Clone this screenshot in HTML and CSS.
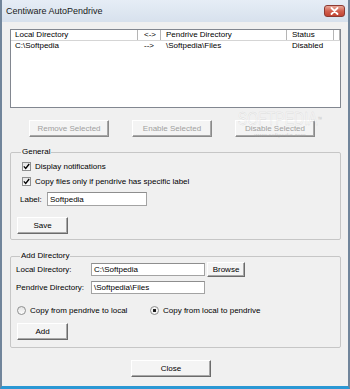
FILE: index.html
```html
<!DOCTYPE html>
<html lang="en">

<head>
    <meta charset="UTF-8" />
    <title>Centiware AutoPendrive</title>
    <link rel="stylesheet" href="styles.css">
</head>

<body>

    <div class="window">
        <div class="titlebar">
            <span class="title">Centiware AutoPendrive</span>
            <span class="close-x">
                <svg width="9" height="8" viewBox="0 0 9 8">
                    <path d="M1.5 1 L7.5 7 M7.5 1 L1.5 7" stroke="#fff" stroke-width="1.8" stroke-linecap="round" />
                </svg>
            </span>
        </div>

        <div class="client">
            <div class="listview">
                <div class="lv-header">
                    <span class="col col-local">Local Directory</span>
                    <span class="col col-dir">&lt;-&gt;</span>
                    <span class="col col-pen">Pendrive Directory</span>
                    <span class="col col-status">Status</span>
                    <span class="col col-rest"></span>
                </div>
                <div class="lv-row">
                    <span class="col col-local">C:\Softpedia</span>
                    <span class="col col-dir">--&gt;</span>
                    <span class="col col-pen">\Softpedia\Files</span>
                    <span class="col col-status">Disabled</span>
                </div>
            </div>

            <div class="actions">
                <button class="btn btn-wide" disabled>Remove Selected</button>
                <button class="btn btn-wide" disabled>Enable Selected</button>
                <button class="btn btn-wide" disabled>Disable Selected</button>
            </div>

            <!-- watermark over the button row -->
            <div class="watermark">
                <span class="wm-big">SOFTPEDIA<sup>™</sup></span>
                <span class="wm-small">www.softpedia.com</span>
            </div>

            <fieldset class="group group-general">
                <legend>General</legend>
                <div class="check">
                    <span class="box"><svg width="7" height="7" viewBox="0 0 7 7"><path d="M0.8 3.4 L2.7 5.5 L6.2 1" fill="none" stroke="#000" stroke-width="1.3" /></svg></span>
                    Display notifications
                </div>
                <div class="check">
                    <span class="box"><svg width="7" height="7" viewBox="0 0 7 7"><path d="M0.8 3.4 L2.7 5.5 L6.2 1" fill="none" stroke="#000" stroke-width="1.3" /></svg></span>
                    Copy files only if pendrive has specific label
                </div>
                <div class="label-row">
                    <span class="label-name">Label:</span>
                    <span class="input input-label">Softpedia</span>
                </div>
                <button class="btn btn-small btn-save">Save</button>
            </fieldset>

            <fieldset class="group group-add">
                <legend>Add Directory</legend>
                <div class="field-row">
                    <span class="field-name">Local Directory:</span>
                    <span class="input input-dir">C:\Softpedia</span>
                    <button class="btn btn-browse">Browse</button>
                </div>
                <div class="field-row field-row-second">
                    <span class="field-name">Pendrive Directory:</span>
                    <span class="input input-dir">\Softpedia\Files</span>
                </div>
                <div class="radio-row">
                    <div class="radio radio-first"><span class="dot"></span>Copy from pendrive to local</div>
                    <div class="radio"><span class="dot on"></span>Copy from local to pendrive</div>
                </div>
                <button class="btn btn-small btn-add">Add</button>
            </fieldset>

            <button class="btn btn-wide btn-close">Close</button>
        </div>
    </div>

</body>

</html>
```

FILE: styles.css
```css
html,
body {
    margin: 0;
    padding: 0;
    background: #fff;
    font-family: "Liberation Sans", Arial, sans-serif;
    font-size: 8px;
    color: #000;
}

.window {
    width: 350px;
    height: 389px;
    box-sizing: border-box;
    display: flex;
    flex-direction: column;
    border-left: 2px solid #71859b;
    border-right: 2px solid #71859b;
    border-bottom: 3px solid #2b98d4;
    background: #dbe4ef;
}

.titlebar {
    height: 22px;
    flex: none;
    display: flex;
    align-items: center;
    justify-content: space-between;
    padding: 0 3px 0 4px;
    background: linear-gradient(#e6edf6, #d7e1ed);
}

.title {
    font-size: 9px;
    color: #1a1a1a;
}

.close-x {
    width: 21px;
    height: 12px;
    box-sizing: border-box;
    display: flex;
    align-items: center;
    justify-content: center;
    border: 1px solid #8c3a33;
    border-radius: 3px;
    background: linear-gradient(#e9a99a, #d2604f 50%, #c24533);
}

.client {
    flex: 1;
    position: relative;
    display: flex;
    flex-direction: column;
    padding: 7px 7px 0 8px;
    background: #f0f0f0;
}

/* list view */

.listview {
    height: 79px;
    box-sizing: border-box;
    border: 1px solid #828790;
    background: #fff;
}

.lv-header,
.lv-row {
    display: flex;
}

.lv-header {
    height: 11px;
    box-sizing: border-box;
    border-bottom: 1px solid #d5d5d5;
}

.lv-header .col {
    border-right: 1px solid #b5b5b5;
    line-height: 10px;
}

.lv-row .col {
    line-height: 10px;
}

.col {
    box-sizing: border-box;
    padding-left: 5px;
    white-space: nowrap;
}

.col-local {
    width: 127px;
    padding-left: 4px;
}

.col-dir {
    width: 23px;
    padding-left: 6px;
}

.col-pen {
    width: 126px;
}

.col-status {
    width: 47px;
}

.col-rest {
    width: 5px;
}

/* buttons */

.btn {
    height: 17px;
    box-sizing: border-box;
    padding: 0;
    font: inherit;
    color: #000;
    background: #f4f4f4;
    border: 1px solid;
    border-color: #fff #6b6b6b #6b6b6b #fff;
    box-shadow: inset -1px -1px #a8a8a8;
}

.btn:disabled {
    color: #a0a0a0;
    border-color: #fff #8a8a8a #8a8a8a #fff;
}

.btn-wide {
    width: 80px;
}

.btn-small {
    width: 51px;
}

.actions {
    display: flex;
    gap: 23px;
    padding-left: 19px;
    margin-top: 12px;
}

.watermark {
    position: absolute;
    left: 230px;
    top: 87px;
    width: 96px;
    display: flex;
    flex-direction: column;
    align-items: center;
    pointer-events: none;
}

.wm-big {
    font-size: 19px;
    line-height: 20px;
    white-space: nowrap;
    transform: scaleX(0.74);
    color: rgba(255, 255, 255, 0.55);
    -webkit-text-stroke: 0.5px rgba(150, 150, 150, 0.3);
}

.wm-big sup {
    font-size: 6px;
    vertical-align: top;
}

.wm-small {
    font-size: 6px;
    margin-top: 3px;
    color: rgba(160, 160, 160, 0.45);
}

/* group boxes */

.group {
    margin: 10px 0 0 0;
    padding: 0 0 5px 6px;
    border: 1px solid #c6c6c6;
    border-radius: 2px;
    display: flex;
    flex-direction: column;
    align-items: flex-start;
}

.group legend {
    line-height: 10px;
    padding: 0 1px;
    margin-left: 4px;
}

.group-general {
    padding-top: 3px;
}

.check {
    height: 13px;
    display: flex;
    align-items: center;
    margin-left: 5px;
}

.check + .check {
    margin-top: 2px;
}

.box {
    width: 9px;
    height: 9px;
    box-sizing: border-box;
    margin-right: 4px;
    display: flex;
    align-items: center;
    justify-content: center;
    border: 1px solid #8e8f8f;
    background: linear-gradient(#e5e5e5, #fcfcfc);
}

.label-row {
    height: 14px;
    display: flex;
    align-items: center;
    margin-top: 4px;
    padding-left: 3px;
}

.label-name {
    width: 27px;
}

.input {
    box-sizing: border-box;
    display: flex;
    align-items: center;
    padding-left: 2px;
    border: 1px solid #a3a3a3;
    border-top-color: #8e8e8e;
    background: #fff;
}

.input-label {
    width: 100px;
    height: 14px;
}

.btn-save {
    margin-top: 11px;
}

.group-add {
    margin-top: 11px;
    padding: 1px 0 7px 5px;
}

.field-row {
    height: 15px;
    display: flex;
    align-items: center;
}

.field-row-second {
    margin-top: 3px;
}

.field-name {
    width: 75px;
}

.input-dir {
    width: 114px;
    height: 13px;
}

.btn-browse {
    width: 38px;
    height: 15px;
    margin-left: 2px;
}

.radio-row {
    height: 13px;
    display: flex;
    align-items: center;
    margin-top: 9px;
    margin-left: 1px;
}

.radio {
    display: flex;
    align-items: center;
}

.radio-first {
    width: 133px;
}

.dot {
    width: 9px;
    height: 9px;
    box-sizing: border-box;
    margin-right: 4px;
    border: 1px solid #8e8f8f;
    border-radius: 50%;
    background: linear-gradient(#e3e3e3, #fdfdfd);
}

.dot.on {
    background: radial-gradient(circle, #111 0, #222 1.5px, #f4f4f4 2px);
}

.btn-add {
    margin-top: 6px;
    margin-left: 1px;
}

.btn-close {
    margin-top: 12px;
    margin-left: 121px;
}
```
